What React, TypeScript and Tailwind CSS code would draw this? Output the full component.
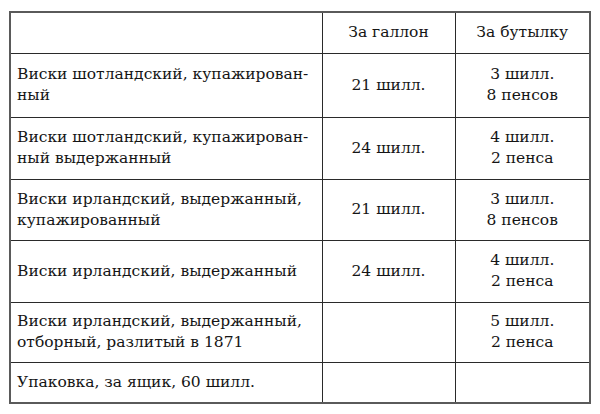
const rows = [
  { name: "Виски шотландский, купажирован-\nный", gallon: "21 шилл.", bottle: "3 шилл.\n8 пенсов", h: "h-[64px]" },
  { name: "Виски шотландский, купажирован-\nный выдержанный", gallon: "24 шилл.", bottle: "4 шилл.\n2 пенса", h: "h-[62px]" },
  { name: "Виски ирландский, выдержанный,\nкупажированный", gallon: "21 шилл.", bottle: "3 шилл.\n8 пенсов", h: "h-[61px]" },
  { name: "Виски ирландский, выдержанный", gallon: "24 шилл.", bottle: "4 шилл.\n2 пенса", h: "h-[62px]" },
  { name: "Виски ирландский, выдержанный,\nотборный, разлитый в 1871", gallon: "", bottle: "5 шилл.\n2 пенса", h: "h-[60px]" },
  { name: "Упаковка, за ящик, 60 шилл.", gallon: "", bottle: "", h: "h-[41px]" },
];

const cell = "border border-[#2a2a2a] text-[15.5px] leading-[21px] whitespace-pre align-middle font-normal";

export default function App() {
  return (
    <div className="w-[600px] h-[414px] bg-white pt-[11px] pl-[9px] font-['DejaVu_Serif',serif] text-[#151515]">
      <table className="w-[580px] border-collapse border-2 border-[#5a5a5a] table-fixed font-['DejaVu_Serif',serif] text-[15.5px]">
        <colgroup>
          <col className="w-[312px]" />
          <col className="w-[133px]" />
          <col className="w-[135px]" />
        </colgroup>
        <thead>
          <tr className="h-[41px]">
            <th className={cell} />
            <th className={`${cell} text-center`}>За галлон</th>
            <th className={`${cell} text-center`}>За бутылку</th>
          </tr>
        </thead>
        <tbody>
          {rows.map((r) => (
            <tr key={r.name} className={r.h}>
              <td className={`${cell} pl-[6px] text-left`}>{r.name}</td>
              <td className={`${cell} text-center`}>{r.gallon}</td>
              <td className={`${cell} text-center`}>{r.bottle}</td>
            </tr>
          ))}
        </tbody>
      </table>
    </div>
  );
}
